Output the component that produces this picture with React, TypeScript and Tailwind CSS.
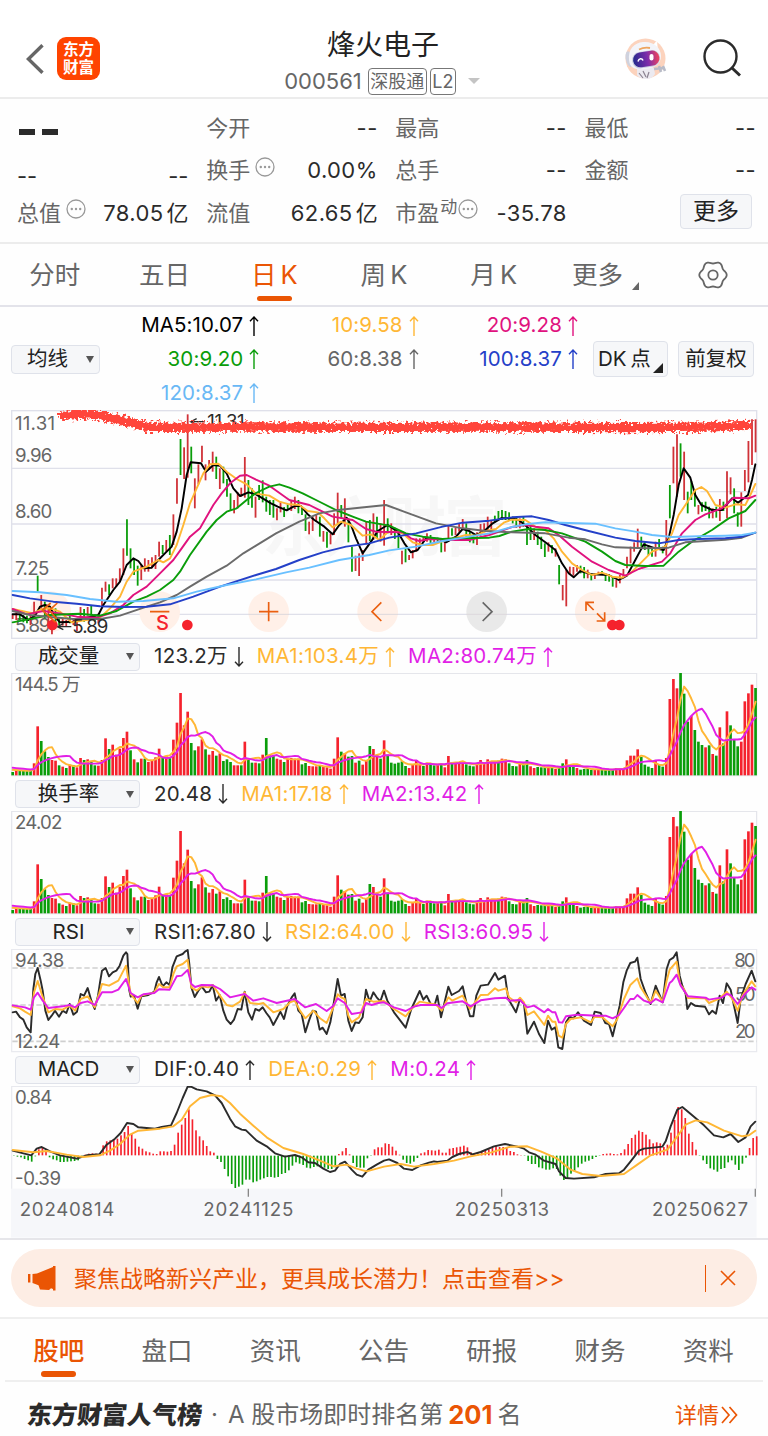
import React, { useState } from 'react';

const RED = '#f5222d';
const GREEN = '#0a9d0a';
const YELLOW = '#ffb735';
const MAGENTA = '#e11fe6';
const DARK = '#2b2b2b';

// One slot per trading day, in chart units (3 units = 1px)
const STEP = 10.715;
const dayX = (i: number, start = 38) => start + i * STEP;

// High / low range of each day
const CANDLES = (
  'r628-642 r622-645 g625-645 g630-652 g632-655 r628-660 r590-640 g512-560 r570-615 g590-640 r600-655 r655-688 g610-650 g640-660 r642-662 r645-665 g630-655 r640-660 r640-678 r606-640 ' +
  'g612-650 r606-632 g602-630 g628-650 r626-655 r548-610 r530-560 g538-570 r520-550 r520-546 r490-530 r430-510 g343-452 g430-490 g462-510 g482-542 r480-525 r460-500 r465-500 r457-490 ' +
  'r450-492 r410-455 g420-447 r405-440 g390-450 r328-420 r220-296 g102-210 r127-222 r28-218 g125-205 r220-310 r178-238 r122-172 r178-226 r165-195 r140-200 g155-222 r190-252 g185-235 ' +
  'g222-275 g265-315 r285-325 r262-310 r248-275 r156-278 g225-300 g250-308 r275-338 g240-285 g226-292 g275-320 g285-330 g285-338 r310-346 r290-322 g306-336 g298-315 r288-318 r275-312 ' +
  'g285-325 g305-330 g328-378 r350-388 r335-378 r330-350 g335-395 r378-410 g380-428 r385-418 r325-390 r263-355 g300-340 r280-365 g340-412 g425-500 r452-498 r445-513 r435-468 r348-418 ' +
  'g345-408 r325-405 g335-400 r355-410 r285-422 g340-385 r355-390 g368-402 g380-430 r437-478 g430-472 r450-465 r435-460 r400-440 r400-425 r395-410 r385-410 g390-415 r398-415 g398-412 ' +
  'g400-442 r405-440 r362-410 g370-392 r368-390 r355-380 r342-375 g355-395 g378-412 g385-415 r382-420 r357-395 r355-380 r335-378 r345-372 g332-352 g318-345 g315-345 g318-345 g322-348 ' +
  'g335-355 g338-368 r340-370 g335-365 g358-420 g362-405 r370-405 g380-420 g395-432 g415-456 r412-440 g420-445 r430-455 g480-538 r540-586 r495-604 r485-510 r486-512 r480-500 g482-505 ' +
  'g486-520 r494-520 g505-526 r505-522 r500-510 g498-508 g505-528 g508-530 g515-545 r525-548 r510-535 r492-520 r455-490 r425-475 r412-440 r371-432 g395-425 g412-435 g420-450 g430-455 ' +
  'r410-455 g402-432 g425-445 r345-452 g240-340 r125-235 r88-275 g115-215 r140-285 g260-325 g228-285 g255-305 r300-328 g292-320 g290-318 g305-340 r310-340 g305-338 r282-348 g290-318 ' +
  'r199-340 r217-268 g250-325 g322-365 r262-365 r195-258 r108-232 r43-180 r43-142'
).split(' ');

const VOLUMES = (
  'g10 r15 g14 g14 g14 g13 r36 r147 g103 g72 g55 r46 r44 g30 r26 g22 r32 g30 r24 r52 g46 r48 g42 g30 r29 r46 r111 g79 r92 r62 r80 r112 r131 g75 r48 g39 r50 g50 r40 r46 ' +
  'r54 r80 g53 r58 g55 r107 r158 r247 r150 r191 g97 g75 r87 r108 g78 r62 r73 g59 r66 g43 g48 g40 r30 r30 g30 r101 g52 g38 r38 g36 r62 g112 g60 g60 r50 r47 g40 r50 r52 r50 ' +
  'r50 g33 g37 r28 r27 r27 g30 r25 r24 r20 r50 r114 g71 r67 g56 g58 r38 g44 r32 r44 g88 r79 r62 g50 r105 g62 g38 g35 g38 g42 g28 r22 r32 r46 r34 g28 r38 g34 g30 r33 ' +
  'g34 r24 r58 g38 r38 r40 r38 g33 g29 g27 r38 r46 r38 r48 r40 r40 g44 r50 r48 g36 g28 g27 r36 g36 g46 r27 r22 g25 g24 g24 r26 g22 r19 g24 g36 r48 g30 g30 r22 g17 ' +
  'g19 g20 g16 r18 r17 g17 g17 g17 g17 r22 r22 r22 r45 r59 r59 r78 g55 g32 g26 g22 r46 g33 g26 r52 r229 r289 r261 g307 g245 g161 r178 g136 g101 g91 r84 g90 r64 g59 r144 g96 ' +
  'r192 g150 g108 g87 r101 r222 r246 r272 g262'
).split(' ');

const MACD_BARS = [
  -1, -3, -5, -10, -14, -18, -2, 18, 25, 15, -5, -11, -14, -19, -19, -18, -17, -16, -14, -3, 2, 5, 6, 5, 4, 30, 42, 45, 48, 50, 60, 70, 88, 65, 50, 26, 20, 12, 9, 5, 4, 12,
  12, 11, 13, 32, 68, 92, 112, 138, 108, 75, 57, 45, 28, 12, 8, -10, -19, -40, -62, -85, -97, -93, -87, -72, -72, -80, -77, -72, -68, -64, -64, -66, -64, -55, -52, -44,
  -30, -20, -24, -28, -36, -38, -34, -32, -34, -36, -40, -40, -35, 4, 12, 22, 3, -22, -34, -36, -36, -8, -1, 18, 24, 24, 36, 34, 26, 14, 2, -12, -22, -24, -18, -7, 6, 9,
  16, 15, 14, 17, 8, 8, 20, 22, 24, 26, 29, 24, 9, 4, 5, 10, 15, 18, 24, 28, 25, 25, 24, 13, 10, 3, 1, -1, -16, -25, -25, -35, -38, -42, -42, -38, -40, -60, -73, -68, -54,
  -47, -35, -24, -18, -15, -10, -4, -1, 4, 5, 6, 4, 3, 7, 18, 34, 52, 62, 74, 70, 62, 48, 36, 39, 36, 25, 32, 68, 106, 145, 138, 112, 65, 40, 17, -1, -14, -25, -38, -42,
  -48, -40, -37, -20, -14, -27, -43, -24, -6, 22, 52, 57,
];

// Joins point lists that were recorded in equal-width segments
const joinSegments = (width: number, segments: string[]) =>
  segments
    .map((segment, n) =>
      segment
        .split(' ')
        .map((p) => {
          const [x, y] = p.split(',').map(Number);
          return `${x + n * width},${y}`;
        })
        .join(' ')
    )
    .join(' ');

const MA_LINES = [
  {
    color: '#000000',
    points: joinSegments(768, [
      '38,628 60,628 85,645 105,632 120,605 135,600 150,605 165,635 180,652 220,650 240,645 260,638 295,630 310,600 340,555 360,530 380,480 400,460 415,468 432,490 455,488 475,465 500,440 515,425 530,380 545,310 560,210 572,172 603,175 618,200 640,180 660,182 680,205 700,250 720,273 745,262',
      '0,268 20,280 45,295 65,305 92,316 118,302 135,303 155,328 175,345 205,365 230,388 250,360 272,338 285,360 300,400 320,445 345,410 365,378 395,360 425,380 445,415 465,442 485,435 510,400 550,402 570,412 600,395 620,372 640,378 660,390 685,378 710,355 735,340',
      '0,340 20,345 45,365 70,390 100,412 130,435 150,475 170,505 185,517 205,498 240,508 290,510 320,525 345,512 370,465 395,418 430,430 455,435 470,400 485,330 500,240 515,190 535,218 550,270 568,300 600,315 630,315 660,280 678,293 708,270 720,225 730,178',
    ]),
  },
  {
    color: YELLOW,
    points: joinSegments(768, [
      '38,612 100,625 125,612 150,610 180,620 215,652 260,645 300,638 330,610 360,575 380,530 400,500 440,485 475,465 490,472 510,460 530,420 550,360 570,295 590,250 610,205 630,178 655,176 680,200 710,222 740,238',
      '0,266 40,272 70,290 100,298 130,300 155,318 185,322 205,340 230,367 255,350 285,360 320,392 345,388 370,405 395,382 420,380 440,385 470,412 500,420 530,420 560,408 600,398 630,390 660,392 690,378 720,372 745,352',
      '0,344 40,345 70,365 100,375 125,400 150,440 180,475 210,495 240,510 270,503 300,515 330,518 355,505 385,475 420,440 460,425 480,385 500,330 530,285 550,255 568,246 585,258 610,300 640,308 670,298 700,300 715,270 730,237',
    ]),
  },
  {
    color: '#e0127e',
    points: joinSegments(768, [
      '38,612 80,628 130,618 180,625 230,635 290,638 330,625 370,600 400,570 440,545 480,505 520,465 545,430 570,395 600,370 640,300 665,265 690,235 720,212 740,210',
      '0,224 40,242 100,285 160,300 230,335 290,345 330,372 360,380 440,382 465,400 490,408 520,402 600,405 640,405 700,390',
      '0,366 40,360 70,365 110,370 140,390 180,425 240,470 290,495 340,512 380,492 450,470 475,445 510,385 550,345 580,328 630,310 665,278 710,280 730,272',
    ]),
  },
  {
    color: '#0a9d0a',
    points: joinSegments(768, [
      '38,652 100,640 150,630 200,628 240,626 300,632 350,618 400,590 440,575 480,555 520,525 540,500 570,450 620,380 650,345 680,320 710,310 740,285',
      '0,264 40,245 70,238 100,248 140,265 180,285 240,315 290,335 330,350 400,362 450,385 500,395 560,402 600,400 700,398 730,393',
      '0,380 50,372 100,375 150,385 220,410 270,440 310,468 340,480 400,483 455,482 500,440 540,410 600,375 650,340 700,318 730,285',
    ]),
  },
  {
    color: '#6b6b6b',
    points: joinSegments(768, [
      '38,618 90,630 150,636 220,642 300,642 360,632 440,605 480,592 530,570 570,545 620,515 680,482 730,445',
      '0,422 60,385 130,350 190,325 240,316 310,308 390,300 450,322 540,355 620,370 690,378',
      '0,382 100,385 170,398 220,403 270,418 310,427 400,430 470,428 520,412 580,408 640,404 690,398 730,383',
    ]),
  },
  {
    color: '#2440c8',
    points: joinSegments(768, [
      '38,570 90,580 160,590 230,596 300,604 370,606 440,605 510,598 580,575 660,545',
      '0,510 60,492 130,465 200,442 270,425 340,415 400,398 480,385 560,365 620,353 700,347',
      '0,337 60,334 110,345 160,360 230,378 310,398 370,408 440,415 500,405 560,402 640,400 690,395 730,383',
    ]),
  },
  {
    color: '#69c0ff',
    points: joinSegments(768, [
      '38,558 120,562 200,570 270,582 350,590 430,588 520,580 590,560 680,540',
      '0,523 90,502 160,488 250,465 340,450 400,436 480,425 560,408 640,395 700,385',
      '0,366 40,358 100,352 170,354 250,356 310,370 370,380 420,390 480,396 560,394 640,392 690,390 730,383',
    ]),
  },
];

const RSI_LINES = [
  {
    color: DARK,
    points: joinSegments(1152, [
      '38,290 48,288 60,305 70,312 80,335 92,350 100,220 106,175 113,157 122,195 128,225 136,285 145,313 155,300 165,285 177,303 188,285 199,292 209,265 220,297 231,288 242,235 252,240 263,217 274,255 284,280 294,240 300,200 306,165 317,157 327,182 338,170 349,165 359,150 370,120 378,110 382,115 385,170 388,225 392,243 402,240 413,279 424,242 445,238 463,228 470,200 477,184 488,212 499,200 509,208 517,155 530,122 548,115 555,108 563,103 568,145 574,215 584,244 595,225 605,212 618,230 628,228 638,208 648,255 659,238 670,285 680,312 692,325 702,312 713,280 724,282 734,228 745,290 756,312 766,280 777,285 788,275 799,292 809,305 820,328 831,308 841,288 852,310 862,270 875,245 884,233 895,285 905,295 916,350 927,315 938,285 948,288 959,342 968,336 980,355 991,320 1002,258 1013,190 1023,240 1034,235 1045,315 1055,346 1066,320 1077,322 1088,305 1098,222 1109,258 1120,230 1130,245 1141,257',
      '0,225 10,255 30,290 65,336 82,280 107,226 118,252 128,240 140,265 152,268 160,240 171,305 193,213 203,238 225,226 236,212 248,265 258,302 268,302 277,240 290,210 312,207 333,172 343,192 363,180 373,250 396,290 408,250 420,265 430,354 450,318 465,355 481,382 492,315 503,342 514,335 523,395 535,400 546,320 557,303 568,308 582,290 600,315 621,328 632,288 650,292 664,322 675,325 686,362 697,315 707,270 718,200 728,165 739,142 753,138 760,126 770,190 785,232 800,265 815,210 836,260 848,160 857,133 868,126 878,110 887,180 895,210 905,235 910,280 921,262 933,270 963,273 975,296 985,285 996,294 1007,240 1017,262 1028,203 1040,222 1050,270 1061,322 1070,250 1085,205 1103,165 1114,197',
    ]),
  },
  {
    color: YELLOW,
    points: joinSegments(1152, [
      '38,272 60,278 75,288 92,298 102,230 113,196 125,235 145,290 165,280 188,282 209,270 225,285 242,250 263,242 284,275 297,235 306,205 327,210 355,195 378,150 392,235 413,262 424,240 463,230 477,205 490,215 509,215 520,175 530,152 548,145 563,132 574,215 590,225 605,212 625,215 638,208 660,240 680,268 697,272 720,258 734,230 750,262 777,265 790,262 820,290 850,280 870,260 884,255 900,285 916,308 940,285 960,308 980,322 1000,275 1013,236 1023,245 1034,250 1045,300 1055,320 1077,305 1098,250 1120,258',
      '0,256 30,280 65,302 82,280 107,258 155,266 173,285 193,245 205,255 236,240 258,280 277,255 290,238 312,237 333,218 343,225 366,218 375,245 396,260 408,246 420,260 430,298 450,287 481,328 492,300 505,318 514,318 524,360 535,366 546,325 560,310 590,305 621,320 632,303 655,305 686,332 700,310 720,250 739,208 760,188 770,215 800,262 815,225 836,258 848,195 857,162 878,138 888,205 900,220 912,247 963,248 975,262 1007,248 1028,228 1045,250 1061,285 1075,240 1103,197 1114,212',
    ]),
  },
  {
    color: MAGENTA,
    points: joinSegments(1152, [
      '38,269 75,275 92,282 102,245 113,231 128,255 145,277 188,272 209,268 225,275 242,262 263,257 284,268 306,230 335,230 355,222 378,190 392,232 413,245 430,236 463,232 477,221 509,222 530,182 545,180 563,163 574,205 585,214 605,208 638,209 660,220 690,245 734,235 760,255 790,248 830,262 884,250 915,275 948,265 980,286 1000,270 1013,248 1034,262 1055,295 1085,290 1098,262 1115,268 1135,262',
      '0,260 30,275 65,286 90,273 110,268 160,268 173,277 190,263 236,257 260,272 290,254 333,248 366,246 376,255 408,253 430,275 450,270 481,290 492,280 505,290 514,290 525,320 535,321 546,302 580,297 640,300 665,300 686,308 705,298 739,250 750,250 760,238 780,255 800,262 815,250 836,260 857,202 865,195 878,177 890,210 912,242 965,246 975,252 1015,245 1028,235 1040,238 1061,265 1080,238 1103,215 1114,222',
    ]),
  },
];

const MACD_LINES = [
  {
    color: DARK,
    points: joinSegments(1152, [
      '38,708 70,716 94,722 110,702 125,697 150,710 180,722 230,732 260,722 298,719 320,690 345,672 362,655 381,625 400,628 415,638 465,642 485,637 513,632 530,595 548,550 563,516 573,516 590,524 620,530 645,542 665,565 690,612 705,635 725,645 738,647 770,678 800,695 825,716 855,726 885,721 905,728 925,743 945,745 970,762 990,772 1005,768 1020,748 1035,741 1055,765 1070,780 1087,786 1105,765 1130,750',
      '0,738 15,734 40,745 60,762 85,766 110,752 135,744 150,740 160,742 190,738 205,727 225,718 250,712 265,719 290,712 330,695 363,688 400,696 420,702 435,713 455,720 480,738 515,748 525,770 545,790 570,792 630,788 665,778 705,776 720,765 740,740 765,708 780,702 835,696 845,680 860,635 880,585 895,577 905,585 930,606 960,632 990,662 1018,668 1040,658 1063,682 1085,668 1100,635 1114,621',
    ]),
  },
  {
    color: YELLOW,
    points: joinSegments(1152, [
      '38,706 100,713 140,709 200,720 250,727 300,722 330,708 360,688 390,660 415,648 480,642 520,635 545,615 570,575 600,550 635,541 665,545 690,565 720,597 760,633 800,668 850,700 910,718 960,738 1000,755 1040,750 1070,762 1100,770',
      '0,756 50,748 90,756 150,748 210,738 260,725 320,714 380,696 430,695 470,710 520,732 560,765 595,778 650,784 720,778 760,750 800,722 850,705 880,665 905,630 935,617 970,623 1020,648 1075,665 1095,662 1114,648',
    ]),
  },
];

// Simple moving average over the volume bars
const movingAverage = (days: number, before: number) => {
  const values = VOLUMES.map((v) => Number(v.slice(1)));
  return values
    .map((_, i) => {
      let sum = 0;
      for (let k = i - days + 1; k <= i; k++) sum += k < 0 ? before : values[k];
      return `${dayX(i).toFixed(1)},${(407 - sum / days).toFixed(1)}`;
    })
    .join(' ');
};

interface LineData {
  color: string;
  points: string;
}

const Lines: React.FC<{ lines: LineData[]; width?: number }> = ({ lines, width = 5.8 }) => (
  <g fill="none" strokeWidth={width} strokeLinejoin="round" strokeLinecap="round">
    {lines.map((line) => (
      <polyline key={line.color} points={line.points} stroke={line.color} />
    ))}
  </g>
);

const AxisText: React.FC<{ x: number; y: number; w: number; color?: string; children: React.ReactNode }> = ({ x, y, w, color = '#666666', children }) => (
  <text x={x} y={y} textLength={w} fontSize="56" fill={color}>
    {children}
  </text>
);

const Arrow: React.FC<{ down?: boolean }> = ({ down }) => (
  <svg viewBox="0 0 10 20" className={`ml-[6px] h-5 w-[10px] shrink-0 ${down ? 'rotate-180' : ''}`} fill="none" stroke="currentColor" strokeWidth="1.4">
    <path d="M5 20V1M1 5.2L5 1l4 4.2" />
  </svg>
);

const InfoDots = () => (
  <svg viewBox="0 0 20 20" className="h-5 w-5 shrink-0" fill="none" stroke="#999999" strokeWidth="1.3">
    <circle cx="10" cy="10" r="9" />
    <g fill="#999999" stroke="none">
      <circle cx="5.8" cy="10" r="1.2" />
      <circle cx="10" cy="10" r="1.2" />
      <circle cx="14.2" cy="10" r="1.2" />
    </g>
  </svg>
);

const Robot = () => (
  <svg viewBox="0 0 42 42" className="h-[42px] w-[42px]">
    <circle cx="20.5" cy="20.5" r="20" fill="#fcd3bd" />
    <path d="M12 30c4-3 14-3 17 0l1 6c-2 4-6 5-9 5-4 0-8-2-9-4z" fill="#eceaf0" />
    <path d="M18 33l3 6M24 34l-2 6M14 35l4 5" stroke="#8b8290" strokeWidth="1.2" />
    <path d="M29 31l9-1M34 28l2 6M38 28l2 5" stroke="#b9bcc8" strokeWidth="2.6" />
    <ellipse cx="4.5" cy="21" rx="3.5" ry="8" fill="#cfd2de" transform="rotate(-12 5 22)" />
    <path d="M26 8c3-1 4-4 6-5l1 10z" fill="#ffffff" />
    <path d="M4 22C3 11 9 5 18 4c11-1 18 6 18 14 0 8-6 12-16 13C11 32 5 31 4 22z" fill="#f3f4f9" />
    <path d="M14 11.5c3-1.5 8-2 11-1.5" stroke="#eda45e" strokeWidth="1.8" fill="none" />
    <rect x="7" y="13" width="28" height="16.5" rx="8" fill="#c9cbe0" transform="rotate(-9 21 21)" />
    <rect x="8" y="13.5" width="26.5" height="15" rx="7.5" fill="url(#visor)" transform="rotate(-9 21 21)" />
    <path d="M13 23.5c1-3.5 4-3.5 5-1" stroke="#ffffff" strokeWidth="1.6" fill="none" />
    <rect x="24.5" y="16" width="4" height="6.5" rx="2" fill="#ffffff" />
    <defs>
      <linearGradient id="visor">
        <stop offset="0" stopColor="#232a8c" />
        <stop offset=".55" stopColor="#7d2cab" />
        <stop offset="1" stopColor="#f0455c" />
      </linearGradient>
    </defs>
  </svg>
);

const Gear = () => {
  const points = Array.from({ length: 73 }, (_, i) => {
    const a = (i * 5 * Math.PI) / 180;
    const r = 12.6 + 1.1 * Math.cos(6 * a);
    return `${(15 + r * Math.cos(a)).toFixed(2)},${(15 + r * Math.sin(a)).toFixed(2)}`;
  }).join(' ');
  return (
    <svg viewBox="0 0 30 30" className="h-[30px] w-[30px]" fill="none" stroke="#666666" strokeWidth="1.8">
      <polygon points={points} strokeLinejoin="round" />
      <circle cx="15" cy="15" r="4.7" />
    </svg>
  );
};

const Header = () => (
  <header className="flex h-[99px] items-start border-b-2 border-[#ececec] bg-white">
    <div className="flex w-[240px] items-center pt-[37px] pl-[26px]">
      <svg viewBox="0 0 18 30" className="mr-[13px] h-[30px] w-[18px]" fill="none" stroke="#666666" strokeWidth="3.4">
        <path d="M16.5 1.2L2.4 15l14.1 13.8" />
      </svg>
      <div className="flex h-[43px] w-[43px] flex-col items-center justify-center rounded-[9px] bg-[#ff4400] text-[15.5px] leading-[18px] font-bold text-white">
        <span>东方</span>
        <span>财富</span>
      </div>
    </div>
    <div className="flex flex-1 flex-col items-center pt-[25px]">
      <h1 className="ml-[-2px] text-[28px] leading-10 text-[#222222]">烽火电子</h1>
      <div className="-mt-px ml-[-4px] flex h-[34px] items-center text-[#666666]">
        <span className="text-[22px]">000561</span>
        <span className="ml-[6px] flex h-[27px] w-[59px] items-center justify-center rounded border border-[#777777] text-[18px]">深股通</span>
        <span className="ml-[3px] flex h-[27px] w-[26px] items-center justify-center rounded border border-[#777777] text-[18px]">L2</span>
        <span className="ml-3 border-x-[6px] border-t-[6px] border-x-transparent border-t-[#c4c4c4]" />
      </div>
    </div>
    <div className="flex w-[240px] items-start justify-end pr-[27px]">
      <div className="mt-[38px] mr-[36px]">
        <Robot />
      </div>
      <svg viewBox="0 0 38 38" className="mt-[39px] h-[38px] w-[38px]" fill="none" stroke="#2b2b2b" strokeWidth="2.4">
        <circle cx="17.5" cy="17.5" r="16" />
        <path d="M28.5 28.5l8.5 8" strokeWidth="3" />
      </svg>
    </div>
  </header>
);

interface CellProps {
  label?: string;
  value: string;
  unit?: string;
  info?: boolean;
  sup?: string;
}

const QuoteCell: React.FC<CellProps> = ({ label, value, unit, info, sup }) => (
  <div className="flex h-[42.5px] items-center justify-between whitespace-nowrap">
    <span className="flex items-center text-[22px] text-[#666666]">
      {label}
      {sup && <span className="-mt-3 ml-px text-[17px]">{sup}</span>}
      {info && (
        <span className={`-mt-2 ${sup ? 'ml-px' : 'ml-[5px]'}`}>
          <InfoDots />
        </span>
      )}
    </span>
    <span className="flex text-[22px] tracking-[0.4px] text-[#2b2b2b]">
      {value}
      {unit && <span className="ml-[3px] tracking-normal">{unit}</span>}
    </span>
  </div>
);

const Quotes = () => (
  <section className="grid h-[145px] grid-cols-4 content-start gap-x-[17.7px] border-b-2 border-[#ececec] pt-[8px] pr-3 pl-[17px]">
    <div className="flex h-[42.5px] items-center gap-[7px] pt-2 pl-[2px]">
      <span className="h-[6px] w-4 bg-[#2b2b2b]" />
      <span className="h-[6px] w-4 bg-[#2b2b2b]" />
    </div>
    <QuoteCell label="今开" value="--" />
    <QuoteCell label="最高" value="--" />
    <QuoteCell label="最低" value="--" />
    <div className="flex h-[42.5px] items-center justify-between pt-3 text-[22px] text-[#2b2b2b]">
      <span>--</span>
      <span>--</span>
    </div>
    <QuoteCell label="换手" info value="0.00%" />
    <QuoteCell label="总手" value="--" />
    <QuoteCell label="金额" value="--" />
    <QuoteCell label="总值" info value="78.05" unit="亿" />
    <QuoteCell label="流值" value="62.65" unit="亿" />
    <QuoteCell label="市盈" sup="动" info value="-35.78" />
    <div className="flex h-[42.5px] items-center justify-end pr-1 pb-1">
      <button className="h-[35px] w-[72px] rounded border border-[#dfe2ea] bg-[#f6f7f9] text-[23px] leading-none text-[#222222]">更多</button>
    </div>
  </section>
);

const PERIODS = ['分时', '五日', '日 K', '周 K', '月 K', '更多'];

const PeriodTabs = () => {
  const [active, setActive] = useState('日 K');
  return (
    <nav className="grid h-[63px] grid-cols-7 border-b-2 border-[#e3e3ea] text-[25.5px]">
      {PERIODS.map((name) => (
        <button
          key={name}
          onClick={() => setActive(name)}
          className={`relative flex items-center justify-center pt-[2px] [word-spacing:-3px] ${active === name ? 'font-normal text-[#ea5504]' : 'text-[#666666]'}`}
        >
          {name}
          {name === '更多' && (
            <svg viewBox="0 0 7 8" className="mt-5 -mr-1 ml-[9px] h-2 w-[7px]" fill="#666666">
              <path d="M7 0v8H0z" />
            </svg>
          )}
          {active === name && <span className="absolute bottom-1 h-[5.5px] w-[35px] rounded-full bg-[#ea5504]" />}
        </button>
      ))}
      <div className="flex items-center justify-center">
        <Gear />
      </div>
    </nav>
  );
};

const MaValue: React.FC<{ color: string; children: React.ReactNode }> = ({ color, children }) => (
  <span className={`flex items-center justify-end ${color}`}>
    {children}
    <Arrow />
  </span>
);

const MaPanel = () => (
  <section className="flex h-[103px] items-center pl-[11px]">
    <button className="mt-px flex h-[29px] w-[89px] items-center justify-between rounded border border-[#dfe2ea] bg-[#f6f7f9] pr-[5px] pl-[15px] text-[20.5px] text-[#222222]">
      均线
      <span className="border-x-4 border-t-[7px] border-x-transparent border-t-[#555555]" />
    </button>
    <div className="mt-[2px] mr-[3px] grid h-[101px] w-[478px] grid-cols-3 grid-rows-3 items-center text-[20.5px] tracking-[0.1px]">
      <MaValue color="text-black">MA5:10.07</MaValue>
      <MaValue color="text-[#ffb735]">10:9.58</MaValue>
      <MaValue color="text-[#e0127e]">20:9.28</MaValue>
      <MaValue color="text-[#0a9d0a]">30:9.20</MaValue>
      <MaValue color="text-[#666666]">60:8.38</MaValue>
      <MaValue color="text-[#2440c8]">100:8.37</MaValue>
      <MaValue color="text-[#69b8f5]">120:8.37</MaValue>
    </div>
    <button className="mt-px ml-3 flex h-9 w-[75px] items-center rounded border border-[#dfe2ea] bg-[#f6f7f9] pl-1 text-[20.5px] whitespace-nowrap text-[#222222] [word-spacing:-2px]">
      DK 点
      <svg viewBox="0 0 10 10" className="mt-[18px] ml-[2px] h-[10px] w-[10px] shrink-0" fill="#222222">
        <path d="M10 0v10H0z" />
      </svg>
    </button>
    <button className="mt-px ml-[10px] h-9 w-[76px] rounded border border-[#dfe2ea] bg-[#f6f7f9] text-[20.5px] text-[#222222]">前复权</button>
  </section>
);

const KLineChart = () => (
  <svg viewBox="0 15 2304 690" className="block h-[230px] w-full">
    <defs>
      <filter id="crayon" x="-5%" y="-200%" width="110%" height="500%">
        <feTurbulence type="fractalNoise" baseFrequency="0.12" numOctaves="3" seed="4" />
        <feDisplacementMap in="SourceGraphic" scale="32" xChannelSelector="R" yChannelSelector="G" />
        <feGaussianBlur stdDeviation="1.4" />
      </filter>
    </defs>
    <text x="786" y="436" textLength="735" fontSize="190" fontWeight="700" fill="#f7f7f7">
      东方财富
    </text>
    <g stroke="#dfe0ea" strokeWidth="4" fill="none">
      <rect x="35" y="17" width="2235" height="683" />
      <path d="M35 190H2270M35 357H2270M35 525H2270M35 628H2270" />
      <path d="M1926 492H2270" strokeWidth="6" />
      <path d="M2101 260H2270" />
    </g>
    {[152, 479, 806, 1133, 1460, 1786].map((cx) => (
      <circle key={cx} cx={cx} cy="620" r="61" fill={cx === 1460 ? '#e9e9e9' : '#fff0e8'} />
    ))}
    <path d="M745 628H867M1072 628H1194M1399 628H1521M1725 628H1847" stroke="#dcd8dc" strokeWidth="3" />
    <AxisText x={45} y={76} w={120}>11.31</AxisText>
    <AxisText x={45} y={171} w={112}>9.96</AxisText>
    <AxisText x={45} y={340} w={112}>8.60</AxisText>
    <AxisText x={45} y={510} w={103}>7.25</AxisText>
    <AxisText x={45} y={682} w={106}>5.89</AxisText>
    <g strokeWidth="5.4">
      {CANDLES.map((candle, i) => {
        const [top, bottom] = candle.slice(1).split('-');
        return <line key={i} x1={dayX(i)} x2={dayX(i)} y1={top} y2={bottom} stroke={candle[0] === 'r' ? '#d03238' : GREEN} />;
      })}
    </g>
    <Lines lines={MA_LINES} />
    <path d="M572 50h42M590 41l-18 9 18 9" stroke={DARK} strokeWidth="4" fill="none" />
    <AxisText x={622} y={68} w={112} color={DARK}>11.31</AxisText>
    <path d="M172 665h42M190 656l-18 9 18 9" stroke={DARK} strokeWidth="4" fill="none" />
    <AxisText x={217} y={685} w={108} color={DARK}>5.89</AxisText>
    <g fill="#f5222d">
      <circle cx="157" cy="660" r="16" />
      <circle cx="562" cy="660" r="16" />
      <circle cx="1837" cy="660" r="16" />
      <circle cx="1858" cy="660" r="16" />
      <text x="468" y="674" fontSize="60" fontWeight="500">S</text>
    </g>
    <g stroke="#ea5f10" strokeWidth="5" fill="none">
      <path d="M152 594l-25 22 40 36M172 594l-24 22 22 26M450 620h58" />
      <path d="M777 620h58M806 591v58M1144 592l-28 28 28 28" />
      <path d="M1448 592l28 28-28 28" stroke="#666666" />
      <path d="M1758 618v-26h24M1758 592l23 23M1814 622v26h-24M1814 648l-23-23" />
    </g>
    <polyline
      points="188,31 270,26 320,36 400,54 445,67 768,66 1152,67 1536,66 1900,68 2120,66 2240,61"
      fill="none"
      stroke="#ff453a"
      strokeWidth="28"
      strokeLinecap="round"
      strokeLinejoin="round"
      filter="url(#crayon)"
    />
  </svg>
);

const VolumeChart: React.FC<{ max: string; width: number }> = ({ max, width }) => (
  <svg viewBox="0 100 2304 313" className="block h-[104.33px] w-full">
    <rect x="35" y="101" width="2235" height="307" fill="none" stroke="#e3e4ea" strokeWidth="3.5" />
    <AxisText x={45} y={153} w={width}>{max}</AxisText>
    {VOLUMES.map((v, i) => (
      <rect key={i} x={dayX(i) - 4} y={407 - Number(v.slice(1))} width="8" height={v.slice(1)} fill={v[0] === 'r' ? RED : GREEN} />
    ))}
    <Lines
      lines={[
        { color: YELLOW, points: movingAverage(5, 18) },
        { color: MAGENTA, points: movingAverage(10, 24) },
      ]}
    />
  </svg>
);

const RsiChart = () => (
  <svg viewBox="0 100 2304 313" className="block h-[104.33px] w-full">
    <rect x="35" y="101" width="2235" height="307" fill="none" stroke="#e8e9ee" strokeWidth="3.5" />
    <path d="M37 157H2270M37 268H2270M37 377H2270" stroke="#cfcfcf" strokeWidth="5" strokeDasharray="16 8" />
    <AxisText x={45} y={154} w={148}>94.38</AxisText>
    <AxisText x={45} y={396} w={136}>12.24</AxisText>
    <AxisText x={2203} y={154} w={64}>80</AxisText>
    <AxisText x={2205} y={257} w={62}>50</AxisText>
    <AxisText x={2205} y={367} w={62}>20</AxisText>
    <Lines lines={RSI_LINES} />
  </svg>
);

const MacdChart = () => (
  <svg viewBox="0 514 2304 455" className="block h-[151.67px] w-full">
    <rect x="33" y="822" width="2237" height="147" fill="#f6f7fa" />
    <path d="M35 822V515.5H2269V822" fill="none" stroke="#e8e9ee" strokeWidth="3.5" />
    <AxisText x={45} y={568} w={112}>0.84</AxisText>
    <AxisText x={45} y={811} w={138}>-0.39</AxisText>
    {MACD_BARS.map((v, i) => (
      <rect key={i} x={dayX(i, 41) - 2} y={v > 0 ? 722 - v : 723} width="5" height={Math.abs(v)} fill={v > 0 ? RED : GREEN} />
    ))}
    <Lines lines={MACD_LINES} />
    <path d="M745 822v24M1505 822v24M2266 822v24" stroke="#888888" strokeWidth="4" />
    <AxisText x={59} y={905} w={284}>20240814</AxisText>
    <AxisText x={610} y={905} w={270}>20241125</AxisText>
    <AxisText x={1364} y={905} w={283}>20250313</AxisText>
    <AxisText x={1956} y={905} w={288}>20250627</AxisText>
  </svg>
);

interface Reading {
  text: string;
  down?: boolean;
}

const READING_COLORS = ['text-[#2b2b2b]', 'text-[#ffb735]', 'text-[#e11fe6]'];

const IndicatorHeader: React.FC<{ name: string; readings: Reading[] }> = ({ name, readings }) => (
  <div className="flex h-[33.34px] items-center pl-[15px] text-[20.5px]">
    <button className="flex h-7 w-[125px] items-center rounded border border-[#dfe2ea] bg-[#f6f7f9] pr-[5px] text-[#222222]">
      <span className="flex-1 pr-[5px] text-center">{name}</span>
      <span className="border-x-4 border-t-[7px] border-x-transparent border-t-[#555555]" />
    </button>
    <div className="ml-[14px] flex gap-[13px] tracking-[0.3px] whitespace-nowrap">
      {readings.map((reading, i) => (
        <span key={reading.text} className={`flex items-center ${READING_COLORS[i]}`}>
          {reading.text}
          <Arrow down={reading.down} />
        </span>
      ))}
    </div>
  </div>
);

const Banner = () => (
  <section className="flex h-[81px] items-center border-y-2 border-t-[#e6e6ea] border-b-[#efefef] bg-white px-[11px]">
    <div className="flex h-[58px] w-full items-center rounded-[29px] bg-[#fdede4] pr-[21px] pl-[17px] text-[#ea5504]">
      <svg viewBox="0 0 28 25" className="h-[25px] w-7" fill="#ea5504">
        <path d="M0 8h2.4v8.5H0zM4.5 8L9 7.5 25 1V0h2.5v24.5H25V23l-2-.7-2 1.7-9-.5-1.5-4.2L4.5 17z" />
      </svg>
      <span className="mt-[2px] ml-[18px] text-[23px] font-normal">聚焦战略新兴产业，更具成长潜力！点击查看&gt;&gt;</span>
      <span className="ml-auto h-[27px] w-[1.5px] bg-[#ea5504]" />
      <svg viewBox="0 0 16 16" className="ml-[14px] h-4 w-4" stroke="#ea5504" strokeWidth="1.6">
        <path d="M1 1l14 14M15 1L1 15" />
      </svg>
    </div>
  </section>
);

const SECTIONS = ['股吧', '盘口', '资讯', '公告', '研报', '财务', '资料'];

const SectionTabs = () => {
  const [active, setActive] = useState('股吧');
  return (
    <nav className="mx-[5px] grid h-[63px] grid-cols-7 border-b-2 border-[#efefef] text-[25.5px]">
      {SECTIONS.map((name) => (
        <button
          key={name}
          onClick={() => setActive(name)}
          className={`relative flex items-center justify-center pt-1 pr-px ${active === name ? 'font-medium text-[#ea5504]' : 'text-[#666666]'}`}
        >
          {name}
          {active === name && <span className="absolute bottom-[3px] h-[5.5px] w-[35px] rounded-full bg-[#ea5504]" />}
        </button>
      ))}
    </nav>
  );
};

const RankRow = () => (
  <section className="flex h-[66px] items-center pt-px pr-[30px] pl-[27px] text-[24px] whitespace-nowrap text-[#666666]">
    <span className="-skew-x-6 text-[25px] font-black text-[#2b2b2b]">东方财富人气榜</span>
    <span className="mr-[10px] ml-[9px]">·</span>
    <span>A 股市场即时排名第</span>
    <span className="mx-[5px] text-[25.5px] font-bold text-[#ea5504]">201</span>
    <span>名</span>
    <span className="ml-auto flex items-center text-[22px] font-normal text-[#ea5504]">
      详情
      <svg viewBox="0 0 17 18" className="ml-[2px] h-[18px] w-[17px]" fill="none" stroke="#ea5504" strokeWidth="1.7">
        <path d="M1 1l7 8-7 8M8.5 1l7 8-7 8" />
      </svg>
    </span>
  </section>
);

const App: React.FC = () => {
  return (
    <div className="h-[1436px] w-[768px] overflow-hidden bg-[#fefefe] font-['Inter','Noto_Sans_CJK_SC',sans-serif] font-[380]">
      <Header />
      <Quotes />
      <PeriodTabs />
      <MaPanel />

      {/* Charts */}
      <KLineChart />
      <IndicatorHeader name="成交量" readings={[{ text: '123.2万', down: true }, { text: 'MA1:103.4万' }, { text: 'MA2:80.74万' }]} />
      <VolumeChart max="144.5 万" width={197} />
      <IndicatorHeader name="换手率" readings={[{ text: '20.48', down: true }, { text: 'MA1:17.18' }, { text: 'MA2:13.42' }]} />
      <VolumeChart max="24.02" width={142} />
      <IndicatorHeader name="RSI" readings={[{ text: 'RSI1:67.80', down: true }, { text: 'RSI2:64.00', down: true }, { text: 'RSI3:60.95', down: true }]} />
      <RsiChart />
      <IndicatorHeader name="MACD" readings={[{ text: 'DIF:0.40' }, { text: 'DEA:0.29' }, { text: 'M:0.24' }]} />
      <MacdChart />

      <Banner />
      <SectionTabs />
      <RankRow />
    </div>
  );
};

export default App;
